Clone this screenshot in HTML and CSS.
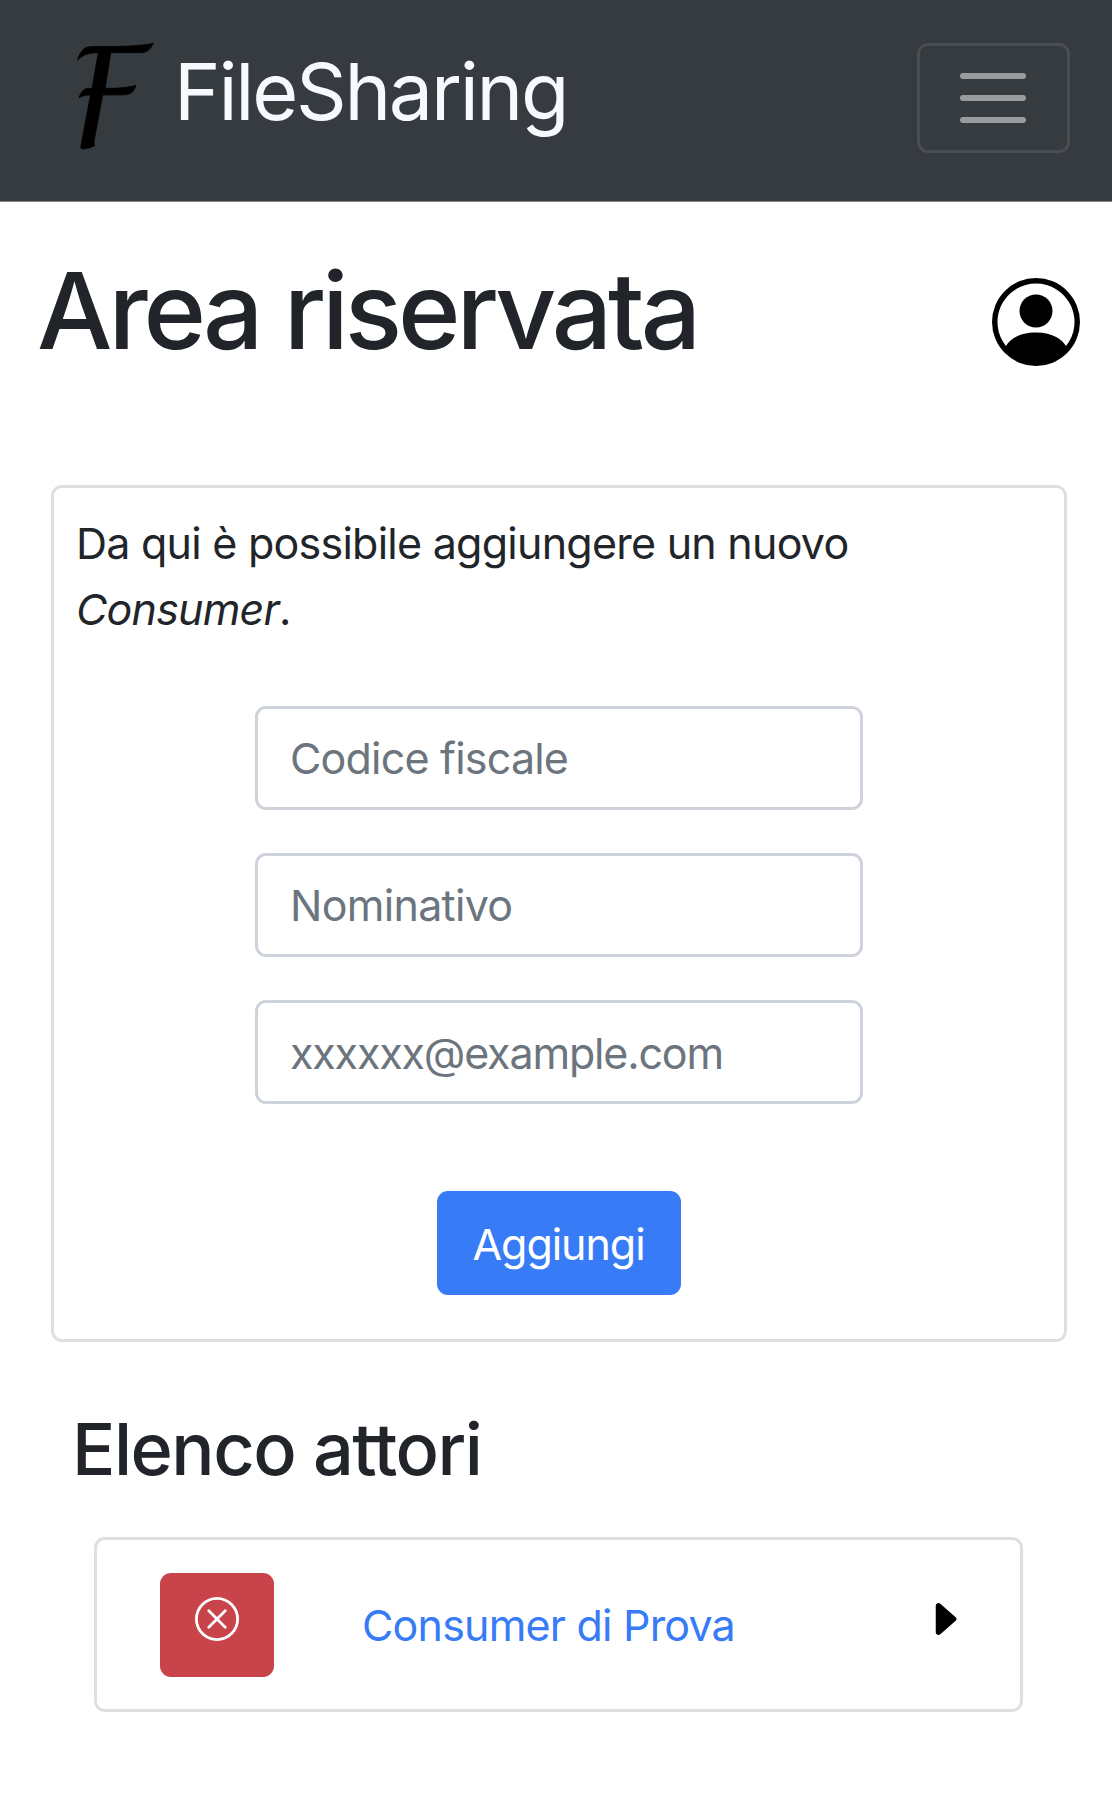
FILE: index.html
```html
<!DOCTYPE html>
<html lang="it">
<head>
<meta charset="utf-8">
<title>FileSharing</title>
<link rel="stylesheet" href="styles.css">
</head>
<body>
<header class="navbar">
  <a class="brand">
    <svg class="brand-logo" viewBox="0 0 78 108" width="78" height="108" aria-hidden="true">
      <path d="M.7 17C3 9 6.500 4.500 12 3.800C16 3.400 20 3.500 26 3.500C50 3.500 62 3 76.500.3C73.500 6 70.500 9.700 63 9.700L33.700 9.700L28.200 45.300C42 45.600 51 44.500 59 42.300C57 48.500 54 51.800 46 51.800L25.700 52L17 98.500C16.800 101 18 101.500 17.300 103C13 105 8 106.300 5 105.800C3.700 105.500 3.600 104.500 3.800 103.500L13.500 52C9 52 5.500 52.600 2 54.700C4 49 6.500 45.700 10.500 45.500L15 45.300L21.300 9.800C12.500 9.800 6 11.500 .7 17Z"/>
    </svg>
    <span class="brand-name">FileSharing</span>
  </a>
  <button class="toggler" type="button" aria-label="Menu">
    <span class="bar"></span><span class="bar"></span><span class="bar"></span>
  </button>
</header>
<main class="page">
  <div class="title-row">
    <h1 class="title">Area riservata</h1>
    <svg class="user-icon" viewBox="0 0 16 16" width="88" height="88" aria-hidden="true">
      <path d="M11 6a3 3 0 1 1-6 0 3 3 0 0 1 6 0z"/>
      <path fill-rule="evenodd" d="M0 8a8 8 0 1 1 16 0A8 8 0 0 1 0 8zm8-7a7 7 0 0 0-5.468 11.37C3.242 11.226 4.805 9.900 8 9.900s4.757 1.325 5.468 2.470A7 7 0 0 0 8 1z"/>
    </svg>
  </div>
  <section class="card">
    <p class="intro"><span class="intro-line">Da qui è possibile aggiungere un nuovo</span> <em>Consumer</em>.</p>
    <form class="form">
      <input class="field field-code" type="text" placeholder="Codice fiscale">
      <input class="field field-name" type="text" placeholder="Nominativo">
      <input class="field field-mail" type="text" placeholder="xxxxxx@example.com">
      <button class="submit" type="button">Aggiungi</button>
    </form>
  </section>
  <h2 class="subtitle">Elenco attori</h2>
  <section class="actor">
    <button class="delete" type="button" aria-label="Elimina">
      <svg viewBox="0 0 16 16" width="44" height="44" fill="currentColor">
        <path d="M8 15A7 7 0 1 1 8 1a7 7 0 0 1 0 14zm0 1A8 8 0 1 0 8 0a8 8 0 0 0 0 16z"/>
        <path d="M4.646 4.646a.5.5 0 0 1 .708 0L8 7.293l2.646-2.647a.5.5 0 0 1 .708.708L8.707 8l2.647 2.646a.5.5 0 0 1-.708.708L8 8.707l-2.646 2.647a.5.5 0 0 1-.708-.708L7.293 8 4.646 5.354a.5.5 0 0 1 0-.708z"/>
      </svg>
    </button>
    <a class="actor-name">Consumer di Prova</a>
    <svg class="caret" viewBox="0 0 16 16" width="44" height="44" aria-hidden="true">
      <path d="M12.140 8.753l-5.482 4.796c-.646.566-1.658.106-1.658-.753V3.204a1 1 0 0 1 1.659-.753l5.480 4.796a1 1 0 0 1 0 1.506z"/>
    </svg>
  </section>
</main>
</body>
</html>
```
FILE: styles.css
```css
* { box-sizing: border-box; }
body {
  margin: 0;
  background: #fff;
  color: #212529;
  font-family: Inter, "Liberation Sans", sans-serif;
  font-size: 43px;
  line-height: 66px;
  letter-spacing: -0.8px;
}
button, input { font: inherit; letter-spacing: inherit; margin: 0; }
.navbar {
  height: 202px;
  padding: 43px 42px 0 77px;
  background: #363b3f;
  border-bottom: 1px solid #85888b;
  display: flex;
  justify-content: space-between;
  align-items: flex-start;
}
.brand { display: flex; gap: 19px; }
.brand-logo path { stroke: #000; stroke-width: 0.8px; }
.brand-name {
  color: #f8f8ff;
  font-size: 79px;
  line-height: 96px;
  letter-spacing: -2.25px;
}
.toggler {
  width: 153px;
  height: 110px;
  padding: 0 1px 0 0;
  border: 3px solid #494e52;
  border-radius: 11px;
  background: none;
  display: flex;
  flex-direction: column;
  align-items: center;
  justify-content: center;
  gap: 16px;
}
.bar { width: 66px; height: 6px; border-radius: 3px; background: #999c9f; }
.page { padding: 0 32px 0 37px; }
.title-row {
  height: 283px;
  padding-top: 43px;
  display: flex;
  justify-content: space-between;
  align-items: flex-start;
}
.title {
  margin: 0;
  font-size: 106.500px;
  line-height: 132px;
  font-weight: 500;
  letter-spacing: -4.1px;
  white-space: nowrap;
}
.user-icon { margin-top: 33px; }
.card {
  width: 1016px;
  height: 857px;
  margin-left: 14px;
  padding: 22px;
  border: 3px solid #dfdfdf;
  border-radius: 11px;
}
.intro { margin: 0; }
.intro-line { display: block; white-space: nowrap; letter-spacing: -0.75px; }
.form { display: flex; flex-direction: column; align-items: center; padding-top: 64px; gap: 43px; }
.field {
  width: 608px;
  height: 104px;
  padding: 0 32px;
  border: 3px solid #ced2db;
  border-radius: 11px;
  background: #fff;
}
.field::placeholder { color: #6c757d; opacity: 1; }
.field-name { letter-spacing: -0.7px; }
.field-mail { padding-top: 1px; letter-spacing: -1.17px; }
.submit {
  width: 244px;
  height: 104px;
  margin-top: 44px;
  padding: 1px 1px 0 0;
  border: 0;
  border-radius: 11px;
  background: #377bf7;
  color: #fff;
  letter-spacing: -1.05px;
}
.subtitle {
  margin: 63px 0 0 35px;
  font-size: 72px;
  line-height: 88px;
  font-weight: 500;
  letter-spacing: -1.5px;
}
.actor {
  width: 929px;
  height: 175px;
  margin: 44px 0 0 57px;
  padding: 33px 54px 0 63px;
  border: 3px solid #dfdfdf;
  border-radius: 11px;
  display: flex;
}
.delete {
  width: 114px;
  height: 104px;
  padding: 24px 0 0;
  border: 0;
  border-radius: 11px;
  background: #c9444a;
  color: #fff;
  display: flex;
  justify-content: center;
  align-items: flex-start;
}
.actor-name { margin: 19px auto 0 88px; color: #377bf7; }
.caret { margin-top: 24px; }
```
